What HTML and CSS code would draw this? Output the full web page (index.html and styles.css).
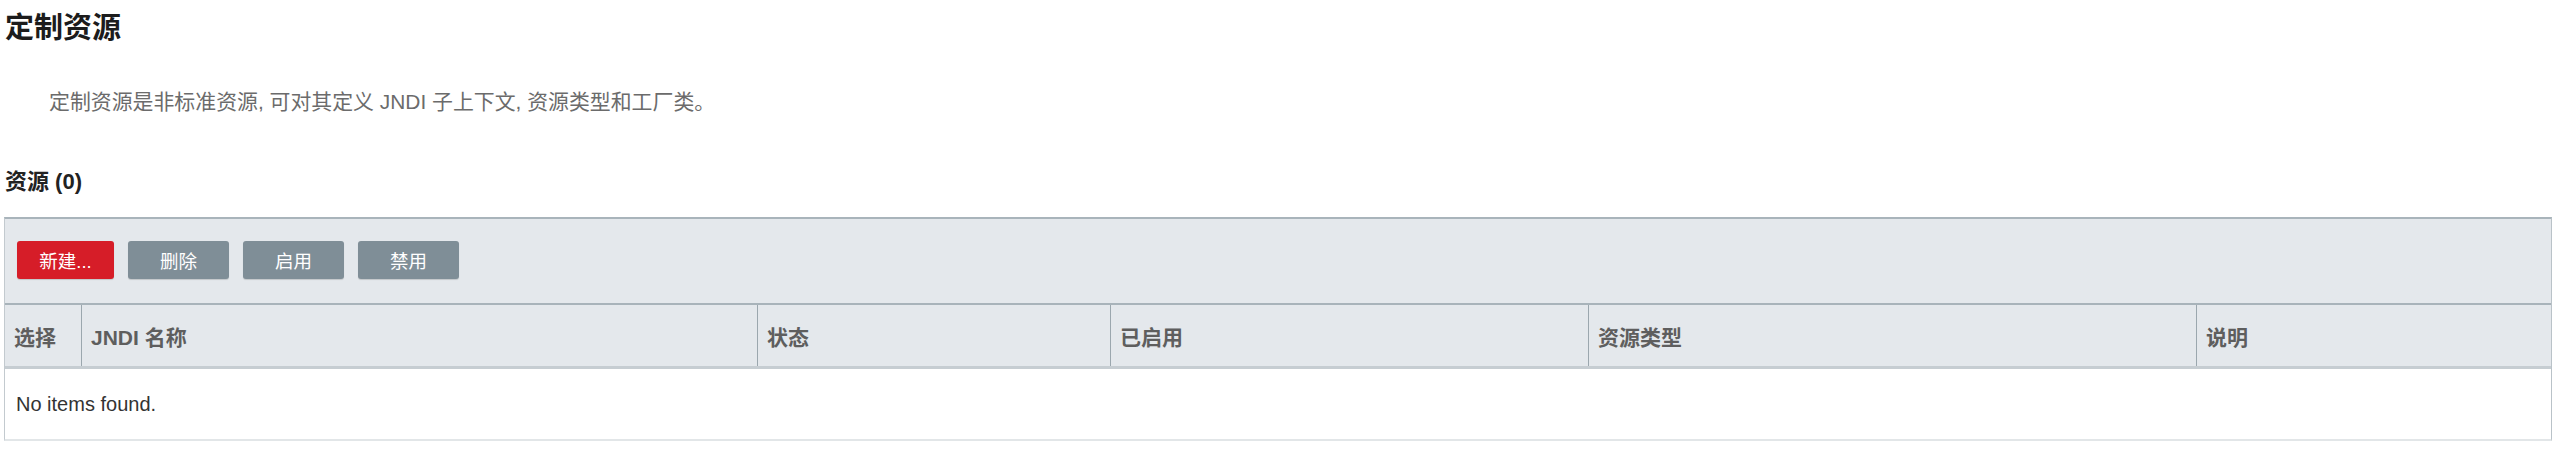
FILE: index.html
```html
<!DOCTYPE html>
<html lang="zh-CN">
<head>
<meta charset="utf-8">
<title>定制资源</title>
<link rel="stylesheet" href="styles.css">
</head>
<body>
<div class="page">
  <h1 class="title">定制资源</h1>
  <p class="desc">定制资源是非标准资源, 可对其定义 JNDI 子上下文, 资源类型和工厂类。</p>
  <h2 class="section">资源 (0)</h2>
  <div class="table">
    <div class="toolbar">
      <button class="btn btn-primary">新建...</button>
      <button class="btn">删除</button>
      <button class="btn">启用</button>
      <button class="btn">禁用</button>
    </div>
    <div class="grid head">
      <div class="cell">选择</div>
      <div class="cell">JNDI 名称</div>
      <div class="cell">状态</div>
      <div class="cell">已启用</div>
      <div class="cell">资源类型</div>
      <div class="cell">说明</div>
    </div>
    <div class="empty">No items found.</div>
  </div>
</div>
</body>
</html>
```
FILE: styles.css
```css
html, body {
  margin: 0;
  padding: 0;
  background: #ffffff;
}
body {
  font-family: "Liberation Sans", "Noto Sans CJK SC", sans-serif;
  color: #333;
}
.page {
  padding: 10px 8px 0 4px;
}
.title {
  margin: 0 0 0 1px;
  font-size: 29px;
  line-height: 36px;
  font-weight: bold;
  color: #1c1c1c;
}
.desc {
  margin: 42px 0 0 45px;
  font-size: 20.9px;
  line-height: 28px;
  color: #6b6b6b;
}
.section {
  margin: 51px 0 0 1px;
  font-size: 22px;
  line-height: 30px;
  font-weight: bold;
  color: #222;
}
.table {
  margin-top: 20px;
  border-top: 2px solid #a9b4bb;
  border-left: 1px solid #c3cacf;
  border-right: 1px solid #b9c2c8;
  border-bottom: 2px solid #e2e6e8;
}
.toolbar {
  display: flex;
  gap: 14px;
  padding: 22px 12px 24px 12px;
  background: #e4e8ec;
}
.btn {
  height: 38px;
  min-width: 101px;
  padding: 0 22px;
  border: none;
  border-radius: 3px;
  background: #7f8e97;
  color: #ffffff;
  font-family: "Liberation Sans", "Noto Sans CJK SC", sans-serif;
  font-size: 18.5px;
  box-shadow: 0 1px 1px rgba(0, 0, 0, 0.15);
}
.btn-primary {
  min-width: 97px;
  background: #d61d28;
}
.grid {
  display: grid;
  grid-template-columns: 76px 676px 353px 478px 608px 1fr;
}
.head {
  background: #e4e8ec;
  border-top: 2px solid #a8b3ba;
  border-bottom: 3px solid #c6cdd2;
}
.cell {
  height: 61px;
  display: flex;
  align-items: center;
  padding-left: 9px;
  font-size: 21px;
  font-weight: bold;
  color: #5e5e5e;
}
.cell + .cell {
  border-left: 1px solid #9ba7ae;
}
.empty {
  height: 70px;
  display: flex;
  align-items: center;
  padding-left: 11px;
  font-size: 20px;
  color: #333;
  background: #fff;
}
```
